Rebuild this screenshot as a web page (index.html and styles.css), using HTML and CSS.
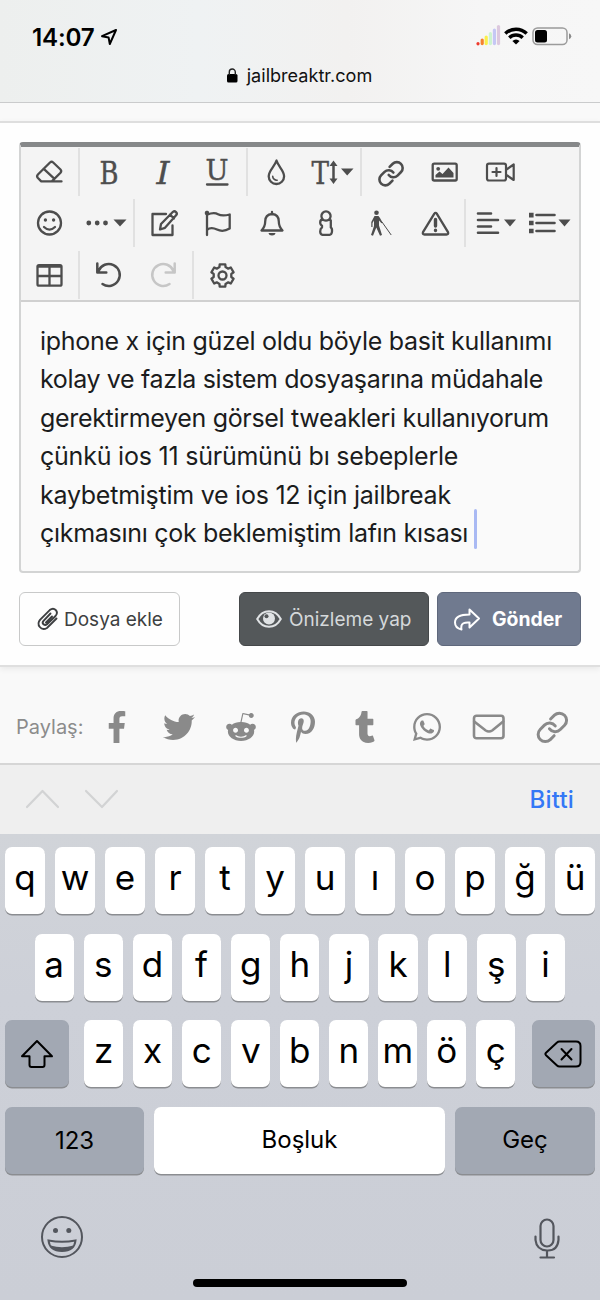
FILE: index.html
```html
<!DOCTYPE html>
<html lang="tr">
<head>
<meta charset="utf-8">
<title>jailbreaktr.com</title>
<link rel="stylesheet" href="styles.css">
</head>
<body>
<div class="phone">
  <header class="browser-bar">
    <div class="status">
      <div class="clock"><span>14:07</span>
        <svg width="18" height="18" viewBox="0 0 18 18"><path d="M16 2 2 8.2l6.6 1.3L9.800 16z" fill="none" stroke="#000" stroke-width="2" stroke-linejoin="round"/></svg>
      </div>
      <div class="indicators">
        <svg class="signal" width="25" height="22" viewBox="0 0 25 22" stroke-width="3.200" stroke-linecap="round"><path d="M2 19.500v.3" stroke="#ee3a2c"/><path d="M6.200 16v3.600" stroke="#f5822e"/><path d="M10.200 13v6.600" stroke="#fbf04a"/><path d="M14.400 9.500v10.100" stroke="#cdf3cf"/><path d="M18.400 6v13.600" stroke="#c5c7f4"/><path d="M22.500 2.500v17.100" stroke="#dcc8de"/></svg>
        <svg class="wifi" width="24" height="18" viewBox="0 0 24 18" fill="none" stroke="#000" stroke-width="3.400"><path d="M1.300 6.500a15.500 15.500 0 0 1 21.400 0"/><path d="M5.300 10.700a9.500 9.500 0 0 1 13.400 0"/><path d="M12 17.500 8.400 14a5 5 0 0 1 7.200 0z" fill="#000" stroke="none"/></svg>
        <svg class="battery" width="40" height="19" viewBox="0 0 40 19"><rect x="1" y="1" width="34" height="16.500" rx="4.500" fill="none" stroke="#9b9b9b" stroke-width="1.500"/><rect x="3" y="3" width="12" height="12.500" rx="2.500"/><path d="M37 6.300q2.300 1 2.300 3t-2.300 3z" fill="#8a8a8a"/></svg>
      </div>
    </div>
    <div class="address">
      <svg width="11" height="15" viewBox="0 0 11 15"><rect y="6" width="10.500" height="8.500" rx="1.500"/><path d="M2.300 7V4a3 3 0 0 1 6 0v3" fill="none" stroke="#222" stroke-width="1.400"/></svg>
      <span>jailbreaktr.com</span>
    </div>
  </header>

  <main>
    <section class="reply">
      <div class="editor">
        <div class="toolbar">
          <div class="row">
            <div class="group">
              <svg class="tool" viewBox="-27 -24 54 48"><path d="M-7.800 9.400-11.300 5.800q-1.300-1.700.2-3.300L1-9.500q1.600-1.400 3.200 0L11.500-2.500q1.400 1.500 0 3.200L2.800 9.400M-5.500-3.300 5.500 6.800M-7.800 9.400h20.300"/></svg>
            </div>
            <div class="group">
              <svg class="tool glyph" viewBox="-27 -24 54 48"><text x="-9.500" y="11.500" textLength="19" lengthAdjust="spacingAndGlyphs">B</text></svg>
              <svg class="tool glyph italic" viewBox="-27 -24 54 48"><text x="-6.500" y="11.500" textLength="13" lengthAdjust="spacingAndGlyphs">I</text></svg>
              <svg class="tool glyph under" viewBox="-27 -24 54 48"><text x="-11.500" y="8" textLength="23" lengthAdjust="spacingAndGlyphs">U</text><path d="M-10 12.500H10.500"/></svg>
            </div>
            <div class="group">
              <svg class="tool" viewBox="-27 -24 54 48"><path d="M-.5-11.500C-2.500-5-8.300-1.500-8.300 4.300a7.700 7.700 0 0 0 15.400 0C7.100-1.500 1.500-5-.5-11.500z"/><path d="M-4.300 4.200a4 4 0 0 0 4.500 4" stroke-width="1.600"/></svg>
              <svg class="tool size" viewBox="-27 -24 54 48"><text x="-19.500" y="11.500" textLength="17.500" lengthAdjust="spacingAndGlyphs">T</text><path d="M2.500-7.500v16" stroke-width="2.500"/><path d="m-1.500-6 4-5.500 4 5.500zM-1.500 6.500l4 5.500 4-5.500zM10-3.500h12.500L16.200 3.600z" class="solid"/></svg>
            </div>
            <div class="group">
              <svg class="tool" viewBox="-27 -24 54 48"><g transform="translate(-14 -12.300) scale(1.170)"><path d="M10 13a5 5 0 0 0 7.540.54l3-3a5 5 0 0 0-7.070-7.070l-2.700 2.700M14 11a5 5 0 0 0-7.540-.54l-3 3a5 5 0 0 0 7.070 7.070l2.700-2.700"/></g></svg>
              <svg class="tool" viewBox="-27 -24 54 48"><rect x="-12.300" y="-8.300" width="24" height="16.800" rx="1.500"/><path d="M-9.500 5.500V3l4-3.500L-2.500 2l6-6.500L8.500 1v4.500z" class="solid"/><circle cx="-6.800" cy="-3.200" r="1.900" class="solid"/></svg>
              <svg class="tool" viewBox="-27 -24 54 48"><g class="camera" transform="translate(1.700 0)"><rect x="-13.700" y="-8.300" width="19" height="16.800" rx="2"/><path d="M-4.200-4v8M-8.200 0h8M6.500-3l6.500-4.500V8L6.500 3.500"/></g></svg>
            </div>
          </div>
          <div class="row wide">
            <div class="group">
              <svg class="tool" viewBox="-27 -24 54 48"><circle cx=".5" r="11.500"/><path d="M-5 4q5.500 5.200 11 0"/><path d="M-3.600-3v.1M4.600-3v.1" stroke-width="3.400"/></svg>
              <svg class="tool" viewBox="-27 -24 54 48"><path d="M-14.200 0v.1M-5.800 0v.1M2.500 0v.1" stroke-width="4.800"/><path d="M10.500-3.500h13L17 3.500z" class="solid"/></svg>
            </div>
            <div class="group">
              <svg class="tool" viewBox="-27 -24 54 48"><path d="M1.500-9H-12v21H8V2.500M-4.500 6.500l1-5.500L8.500-11.200q1.500-1.200 3 .3t.3 3L.5 4.800zM5.500-8.500l4 4" transform="translate(.5 0)"/></svg>
              <svg class="tool" viewBox="-27 -24 54 48"><path d="M-11-11v23M-11-8.300Q-4-11 0-8.800T11.700-8.500V5.500Q5 9.500-1 6.500T-11 6.800"/><circle cx="-11" cy="-10" r="2.300" class="solid"/></svg>
              <svg class="tool" viewBox="-27 -24 54 48"><path d="M-10.500 7.500Q-6.800 3.500-6.800-1.500Q-6.800-8.500 0-9Q6.800-8.500 6.800-1.500Q6.800 3.500 10.500 7.500zM0-11v2"/><path d="M-3.500 10h7q-.5 2.500-3.500 2.500T-3.500 10z" class="solid"/></svg>
              <svg class="tool" viewBox="-27 -24 54 48"><path d="M-3-3.500a4.600 4.600 0 1 1 6 0l1.800.8V4.500q1.500.8 1.200 4T3.500 11.800h-7Q-5.800 11.500-5.800 8.500T-4 4.500V2.500Q-5.800 2-5.800-.7T-3-3.500zM-2.500-3q2.500 1.200 5 0"/></svg>
              <svg class="tool" viewBox="-27 -24 54 48"><circle cx="-3.500" cy="-10.200" r="2.300" class="solid"/><path d="M-5.500-7h4L0-5l2.500 4.500-1 .8L-1 -2.500V2.500L2 12l-2 .8L-3.700 4.500-7 12.800l-2-.8L-6 3v-5.500L-7.500 0v4h-1.200v-5z" class="solid"/><path d="m2-1 9 12.700" stroke-width="1"/></svg>
              <svg class="tool" viewBox="-27 -24 54 48"><path d="M.2-9.200Q1.500-11 2.900-9.200L14 9.200Q14.800 11.500 12.500 11.500h-22Q-11.800 11.500-11 9.200z"/><path d="M1.500-3.500V3M1.500 7.300v.2" stroke-width="3.400"/></svg>
            </div>
            <div class="group">
              <svg class="tool thick" viewBox="-27 -24 54 48"><path d="M-17-9.500h13M-17-3H3M-17 3.500h13M-17 9.800H3"/><path d="M9-3.500h12L15 3.500z" class="solid"/></svg>
              <svg class="tool thick" viewBox="-27 -24 54 48"><path d="M-12.500-8H5.500M-12.500 0H5.500M-12.500 8H5.500"/><path d="M-20-10.200h4.600v4.600H-20zM-20-2.300h4.600v4.600H-20zM-20 5.700h4.600v4.600H-20zM9.500-3.500h12L15.500 3.500z" class="solid"/></svg>
            </div>
          </div>
          <div class="row">
            <div class="group">
              <svg class="tool" viewBox="-27 -24 54 48"><rect x="-11.500" y="-9.800" width="24" height="20.500" rx="1.500"/><path d="M.5-8v18M-11-8.500h23M-11 1h23"/></svg>
            </div>
            <div class="group">
              <svg class="tool" viewBox="-27 -24 54 48"><path d="M-11.700-11.500v9h9M-10.500-4a11 11 0 1 1 4 13" stroke-width="2.500"/></svg>
              <svg class="tool faded" viewBox="-27 -24 54 48"><path d="M11.700-11.500v9h-9M10.500-4a11 11 0 1 0-4 13" stroke-width="2.500"/></svg>
            </div>
            <div class="group">
              <svg class="tool" viewBox="-27 -24 54 48"><g transform="translate(-.5 .5) scale(1.050)"><path d="M-2.660-10.670H2.660L2.900-8 5.460-6.510 7.910-7.640 10.570-3.030 8.370-1.480V1.480L10.570 3.030 7.910 7.640 5.460 6.510 2.900 8 2.660 10.670H-2.660L-2.900 8-5.460 6.510-7.910 7.640-10.570 3.030-8.370 1.480V-1.480L-10.570-3.030-7.910-7.640-5.460-6.510-2.900-8z"/><circle r="3.800"/></g></svg>
            </div>
          </div>
        </div>
        <div class="message">
          <span class="line l1">iphone x için güzel oldu böyle basit kullanımı</span>
          <span class="line l2">kolay ve fazla sistem dosyaşarına müdahale</span>
          <span class="line l3">gerektirmeyen görsel tweakleri kullanıyorum</span>
          <span class="line l4">çünkü ios 11 sürümünü bı sebeplerle</span>
          <span class="line l5">kaybetmiştim ve ios 12 için jailbreak</span>
          <span class="line l6">çıkmasını çok beklemiştim lafın kısası<i class="caret"></i></span>
        </div>
      </div>
      <div class="actions">
        <div class="btn attach">
          <svg width="22" height="24" viewBox="0 0 22 24" fill="none" stroke="#3d3f41" stroke-width="1.900" stroke-linecap="round"><path d="M13.500 6.500 6.500 13.800q-1.700 2 0 3.500t3.500 0L18.500 9q2.800-3.400.2-6t-6 .1L3 12.800Q0 16.500 2.800 20t7.200 1l9.500-9.500M15 9.500l-6 6"/></svg>
          <span>Dosya ekle</span>
        </div>
        <div class="btn preview">
          <svg width="26" height="18" viewBox="0 0 26 18"><path d="M1.200 9Q5.500 1.200 13 1.200T24.800 9Q20.500 16.800 13 16.800T1.200 9z" fill="none" stroke="#e0e3e5" stroke-width="2"/><circle cx="13" cy="8.500" r="6" fill="#e0e3e5"/><circle cx="10.500" cy="6.300" r="2" fill="#54585a"/></svg>
          <span>Önizleme yap</span>
        </div>
        <div class="btn send">
          <svg width="26" height="23" viewBox="0 0 26 23" fill="none" stroke="#fff" stroke-width="2" stroke-linejoin="round"><path d="M15.500 1.500 25 10.500 15.500 19.500V14.500Q8.500 14 7.500 17.500 7 20 7.500 21.500 1 20 1 14.500 1 6.500 15.500 6.500z"/></svg>
          <span>Gönder</span>
        </div>
      </div>
    </section>

    <section class="share">
      <span class="share-label">Paylaş:</span>
      <div class="networks">
        <svg viewBox="-124 0 512 512"><path d="M76.700 512V283H0v-91h76.700v-71.700C76.700 42.400 124.300 0 193.800 0c33.300 0 61.900 2.500 70.200 3.600V85h-48.200c-37.800 0-45.100 18-45.100 44.300V192H256l-11.700 91h-73.600v229"/></svg>
        <svg viewBox="0 0 512 512"><path d="M459.370 151.716c.325 4.548.325 9.097.325 13.645 0 138.720-105.583 298.558-298.558 298.558-59.452 0-114.680-17.219-161.137-47.106 8.447.974 16.568 1.299 25.340 1.299 49.055 0 94.213-16.568 130.274-44.832-46.132-.975-84.792-31.188-98.112-72.772 6.498.974 12.995 1.624 19.818 1.624 9.421 0 18.843-1.300 27.614-3.573-48.081-9.747-84.143-51.980-84.143-102.985v-1.299c13.969 7.797 30.214 12.670 47.431 13.319-28.264-18.843-46.781-51.005-46.781-87.391 0-19.492 5.197-37.360 14.294-52.954 51.655 63.675 129.300 105.258 216.365 109.807-1.624-7.797-2.599-15.918-2.599-24.040 0-57.828 46.782-104.934 104.934-104.934 30.213 0 57.502 12.670 76.670 33.137 23.715-4.548 46.456-13.320 66.599-25.340-7.798 24.366-24.366 44.833-46.132 57.827 21.117-2.273 41.584-8.122 60.426-16.243-14.292 20.791-32.161 39.308-52.628 54.253z"/></svg>
        <svg viewBox="0 0 512 512"><path d="M440.300 203.500c-15 0-28.200 6.200-37.900 15.900-35.700-24.700-83.800-40.600-137.100-42.300L293 52.300l88.200 19.800c0 21.600 17.600 39.200 39.200 39.200 22 0 39.700-18.100 39.700-39.700s-17.600-39.700-39.700-39.700c-15.400 0-28.700 9.300-35.300 22l-97.400-21.600c-4.900-1.300-9.700 2.200-11 7.100L246.300 177c-52.900 2.200-100.500 18.100-136.300 42.800-9.700-10.100-23.400-16.300-38.400-16.300-55.600 0-73.800 74.600-22.900 100.100-1.800 7.900-2.600 16.300-2.600 24.700 0 83.800 94.400 151.700 210.300 151.700 116.400 0 210.800-67.900 210.800-151.700 0-8.400-.9-17.200-3.100-25.100 49.900-25.600 31.500-99.700-23.800-99.700zM129.400 308.900c0-22 17.600-39.700 39.700-39.700 21.600 0 39.200 17.600 39.200 39.700 0 21.600-17.600 39.200-39.200 39.200-22 .1-39.700-17.600-39.700-39.200zm214.300 93.500c-36.400 36.400-139.100 36.400-175.500 0-4-3.500-4-9.700 0-13.700 3.500-3.500 9.700-3.500 13.200 0 27.800 28.500 120 29 149 0 3.500-3.500 9.700-3.500 13.200 0 4.100 4 4.100 10.200.1 13.700zm-.8-54.200c-21.600 0-39.200-17.600-39.200-39.200 0-22 17.600-39.700 39.200-39.700 22 0 39.700 17.600 39.700 39.700-.1 21.500-17.700 39.200-39.700 39.200z"/></svg>
        <svg viewBox="-64 0 512 512"><path d="M204 6.500C101.400 6.500 0 74.900 0 185.600 0 256 39.600 296 63.600 296c9.900 0 15.600-27.600 15.600-35.400 0-9.300-23.700-29.100-23.700-67.800 0-80.400 61.200-137.400 140.400-137.400 68.100 0 118.500 38.700 118.500 109.800 0 53.100-21.300 152.700-90.300 152.700-24.900 0-46.200-18-46.200-43.800 0-37.800 26.400-74.400 26.400-113.400 0-66.200-93.900-54.200-93.900 25.800 0 16.800 2.100 35.400 9.600 50.700-13.800 59.400-42 147.900-42 209.100 0 18.900 2.700 37.500 4.500 56.400 3.400 3.800 1.700 3.400 6.900 1.500 50.400-69 48.600-82.500 71.400-172.800 12.300 23.400 44.100 36 69.300 36 106.200 0 153.900-103.500 153.900-196.800C384 71.300 298.200 6.500 204 6.500z"/></svg>
        <svg viewBox="-96 0 512 512"><path d="M309.800 480.300c-13.600 14.500-50 31.700-97.400 31.700-120.800 0-147-88.800-147-140.600v-144H17.900c-5.500 0-10-4.500-10-10v-68c0-7.200 4.500-13.600 11.300-16 62-21.800 81.500-76 84.300-117.100.8-11 6.500-16.300 16.100-16.300h70.900c5.500 0 10 4.500 10 10v115.200h83c5.500 0 10 4.400 10 9.900v81.700c0 5.500-4.500 10-10 10h-83.400V360c0 34.200 23.700 53.600 68 35.800 4.800-1.900 9-3.200 12.700-2.200 3.500.9 5.800 3.400 7.400 7.900l22 64.300c1.800 5 3.300 10.600-.4 14.500z"/></svg>
        <svg viewBox="-32 0 512 512"><path d="M380.900 97.100C339 55.100 283.200 32 223.900 32c-122.400 0-222 99.600-222 222 0 39.100 10.200 77.300 29.600 111L0 480l117.700-30.900c32.400 17.700 68.900 27 106.100 27h.1c122.300 0 224.100-99.600 224.100-222 0-59.300-25.200-115-67.100-157zm-157 341.600c-33.200 0-65.700-8.900-94-25.700l-6.700-4-69.800 18.300L72 359.200l-4.400-7c-18.500-29.400-28.200-63.300-28.200-98.200 0-101.700 82.800-184.500 184.600-184.500 49.300 0 95.600 19.200 130.400 54.100 34.800 34.900 56.200 81.200 56.100 130.500 0 101.800-84.900 184.600-186.600 184.600zm101.200-138.200c-5.500-2.800-32.800-16.200-37.900-18-5.100-1.900-8.800-2.800-12.500 2.800-3.700 5.600-14.300 18-17.600 21.800-3.200 3.700-6.500 4.200-12 1.400-32.600-16.300-54-29.100-75.500-66-5.700-9.800 5.700-9.100 16.300-30.300 1.800-3.700.9-6.900-.5-9.700-1.400-2.800-12.500-30.100-17.100-41.200-4.500-10.800-9.100-9.300-12.500-9.500-3.200-.2-6.900-.2-10.600-.2-3.700 0-9.700 1.400-14.800 6.900-5.100 5.600-19.400 19-19.400 46.300 0 27.300 19.900 53.700 22.600 57.400 2.800 3.700 39.100 59.700 94.800 83.800 35.200 15.200 49 16.500 66.600 13.900 10.700-1.600 32.800-13.400 37.400-26.400 4.600-13 4.600-24.100 3.200-26.400-1.300-2.500-5-3.900-10.500-6.600z"/></svg>
        <svg viewBox="0 0 32 32" class="outline"><rect x="1" y="4.800" width="29.500" height="22.500" rx="2.500"/><path d="m1.200 10.500 11.500 9q3.300 2 6.500 0L30.200 10.500"/></svg>
        <svg viewBox="-16 -16 32 32" class="outline"><g transform="translate(-16.800 -16.800) scale(1.430)"><path d="M10 13a5 5 0 0 0 7.540.54l3-3a5 5 0 0 0-7.070-7.070l-2.700 2.700M14 11a5 5 0 0 0-7.540-.54l-3 3a5 5 0 0 0 7.070 7.070l2.700-2.700"/></g></svg>
      </div>
    </section>
  </main>

  <div class="accessory">
    <svg width="100" height="20" viewBox="0 0 100 20" fill="none" stroke="#d2d3d4" stroke-width="2.200" stroke-linecap="round" stroke-linejoin="round"><path d="M2 17 17.500 1 33 17M61 1 77 17 92 1"/></svg>
    <span class="done">Bitti</span>
  </div>

  <div class="keyboard">
    <div class="keys first"><b>q</b><b>w</b><b>e</b><b>r</b><b>t</b><b>y</b><b>u</b><b>ı</b><b>o</b><b>p</b><b>ğ</b><b>ü</b></div>
    <div class="keys second"><b>a</b><b>s</b><b>d</b><b>f</b><b>g</b><b>h</b><b>j</b><b>k</b><b>l</b><b>ş</b><b>i</b></div>
    <div class="keys third">
      <b class="dark shift"><svg width="34" height="30" viewBox="0 0 34 30" fill="none" stroke="#000" stroke-width="2" stroke-linejoin="round"><path d="M17 2 32 17.300H24.500V26q0 2-2 2H11.500q-2 0-2-2V17.300H2z"/></svg></b>
      <div class="letters"><b>z</b><b>x</b><b>c</b><b>v</b><b>b</b><b>n</b><b>m</b><b>ö</b><b>ç</b></div>
      <b class="dark erase"><svg width="38" height="30" viewBox="0 0 38 30" fill="none" stroke="#000" stroke-width="2" stroke-linejoin="round"><path d="M15.500 2.500H32q4.500 0 4.500 4.500v16q0 4.500-4.500 4.500H15.500q-1.500 0-2.500-1L2 16.200Q.8 15 2 13.800L13 3.500q1-1 2.500-1zM17.500 10l10 10.500M27.500 10l-10 10.500" stroke-linecap="round"/></svg></b>
    </div>
    <div class="keys fourth"><b class="dark digits">123</b><b class="space">Boşluk</b><b class="dark go">Geç</b></div>
    <div class="dock">
      <svg width="42" height="42" viewBox="0 0 42 42" fill="none" stroke="#53565d" stroke-width="2"><circle cx="21" cy="21" r="20"/><path d="M7.500 24.500q13.500 2.500 27 0Q33.500 35 21 35T7.500 24.500z"/><path d="M9.500 29.500q11.500 3.500 23 0Q29.500 35 21 35T9.500 29.500z" fill="#53565d" stroke="none"/><circle cx="14.500" cy="14.500" r="2.500" fill="#53565d" stroke="none"/><circle cx="27.800" cy="14.500" r="2.500" fill="#53565d" stroke="none"/></svg>
      <svg width="26" height="42" viewBox="0 0 26 42" fill="none" stroke="#53565d" stroke-width="2.200" stroke-linecap="round"><rect x="6.500" y="3.500" width="13" height="27" rx="6.500"/><path d="M1.500 20.500v3.500q1 10 11.500 10.500t11.500-10.500v-3.500M13 35v6.500M6.500 41.500h13.500"/></svg>
    </div>
    <div class="home"></div>
  </div>
</div>
</body>
</html>
```
FILE: styles.css
```css
* { box-sizing: border-box; }
body { margin: 0; font-family: Inter, "Liberation Sans", sans-serif; }
svg { display: block; flex: none; overflow: visible; }
.phone { width: 600px; height: 1300px; overflow: hidden; background: #f9f9f9; }

.browser-bar {
  height: 103px;
  border-bottom: 1px solid #cacbcc;
  background: linear-gradient(90deg, #edefee 0%, #eff2f3 33%, #f2f1f0 58%, #f6f6f6 80%, #f7f7f7 100%);
}
.status { display: flex; justify-content: space-between; height: 63px; padding: 23px 28px 0 32px; }
.clock { display: flex; gap: 6px; height: 28px; align-items: center; font-size: 24.200px; font-weight: 600; letter-spacing: -.2px; }
.indicators { display: flex; align-items: flex-start; height: 28px; }
.wifi { margin: 4px 0 0 3px; }
.battery { margin: 4px 0 0 4px; }
.signal { margin-top: 1px; }
.address { display: flex; justify-content: center; align-items: center; gap: 9px; height: 24px; padding-right: 1px; color: #111; font-size: 18.100px; }

.reply {
  margin-top: 18px; height: 546px; padding: 19px 19px 0;
  background: #fefefe; border-top: 2px solid #dedede; border-bottom: 2px solid #dfdfdf;
  box-shadow: 0 2px 6px rgba(0, 0, 0, .07);
}
.editor { height: 431px; border: 2px solid #d3d4d4; border-top: 5px solid #868889; border-radius: 4px; background: #fafafa; }
.toolbar { height: 155px; padding-top: 1px; border-bottom: 2px solid #d0d0d0; background: #f4f4f4; }
.row { display: flex; height: 51.400px; }
.group { display: flex; height: 48px; padding: 0 2px; border-left: 2px solid #e1e1e1; }
.group:first-child { border-left: 0; padding: 0 2px 0 1px; }
.wide .group { padding-right: 3px; }
.wide .group:first-child { padding-right: 3px; }
.tool { width: 54px; height: 48px; fill: none; stroke: #4d4d4d; stroke-width: 2.300px; stroke-linejoin: round; stroke-linecap: round; }
.tool g { stroke-width: 2.200px; }
.tool .solid { fill: #4d4d4d; stroke: none; }
.tool text { font: 31px "DejaVu Serif", serif; fill: #4d4d4d; stroke: #4d4d4d; stroke-width: .4px; }
.tool.italic text { font-style: italic; }
.tool.under text { font-size: 28px; }
.thick { stroke-width: 2.600px; }
.faded { stroke: #c6c6c6; }
.message { padding: 20px 19px; color: #1b1c1d; font-size: 25px; line-height: 38.400px; }
.line { display: block; white-space: nowrap; }
.l1 { letter-spacing: -.28px; }
.l2 { letter-spacing: -.35px; }
.l3 { letter-spacing: -.32px; }
.l4 { letter-spacing: -.22px; }
.l5 { letter-spacing: -.25px; }
.l6 { letter-spacing: -.29px; }
.caret { display: inline-block; width: 3px; height: 40px; margin: -8px 0 -8px 6px; vertical-align: -7px; border-radius: 2px; background: #a9b9f3; position: relative; top: -8px; }

.actions { display: flex; margin-top: 19px; height: 54px; }
.btn { display: flex; align-items: center; border: 1.500px solid #c8c9c9; border-radius: 6px; font-size: 19px; white-space: nowrap; }
.attach { width: 161px; padding-left: 17px; gap: 5px; color: #3d3f41; }
.preview { width: 190px; margin-left: 59px; padding-left: 16px; gap: 7px; background: #54585a; border-color: #45484a; color: #d5d8da; }
.send { width: 144px; margin-left: 8px; padding-left: 16px; gap: 12px; background: #707a8f; border-color: #5f687c; color: #fff; font-size: 19.400px; font-weight: 700; }

.share { display: flex; align-items: center; height: 96px; padding: 23px 0 0 16px; color: #8c8c8c; }
.share-label { width: 70px; font-size: 20px; }
.networks { display: flex; gap: 30px; margin-left: 15px; }
.networks svg { width: 32px; height: 32px; fill: #8a8a8a; }
.networks .outline { fill: none; stroke: #8a8a8a; stroke-width: 2.600px; stroke-linecap: round; }
.networks .outline g { stroke-width: 2.100px; }
.networks svg:last-child { margin-left: 1px; }

.accessory { display: flex; justify-content: space-between; align-items: center; height: 71px; padding: 0 26px 0 25px; border-top: 2px solid #d6d6d6; background: #efefef; }
.done { color: #3478f6; font-size: 24px; font-weight: 500; letter-spacing: .2px; }

.keyboard { height: 466px; padding: 13px 5px 0; background: linear-gradient(#d1d4d9, #cdd0d8 35%, #cbced6); }
.keys { display: flex; height: 67px; }
.keys b {
  display: flex; align-items: center; justify-content: center; flex: 1;
  min-width: 0; padding-bottom: 7px; border-radius: 7px; background: #fff; box-shadow: 0 1.500px 0 #8b8d91;
  font-size: 35px; font-weight: 400; color: #000;
}
.first { gap: 10px; }
.second { gap: 9.800px; margin-top: 19.500px; padding: 0 30px 0 29.500px; }
.third { margin-top: 19.500px; }
.letters { display: flex; flex: 1; gap: 9.800px; margin: 0 16px 0 15.500px; }
.fourth { gap: 10px; margin-top: 19.500px; }
.keys .dark { flex: none; background: #a2a8b3; }
.keys .shift, .keys .erase { width: 63.500px; padding-bottom: 0; }
.keys .digits { width: 139px; }
.keys .go { width: 140px; }
.fourth b { padding-bottom: 2px; font-size: 24px; }
.keys .digits, .keys .go, .keys .space { padding-bottom: 2px; font-size: 24px; }
.keys .digits { padding-bottom: 0; }
.dock { display: flex; justify-content: space-between; margin-top: 42px; padding: 0 35px 0 36px; }
.home { width: 214px; height: 8px; margin: 21px auto 0; border-radius: 4px; background: #000; }
```
